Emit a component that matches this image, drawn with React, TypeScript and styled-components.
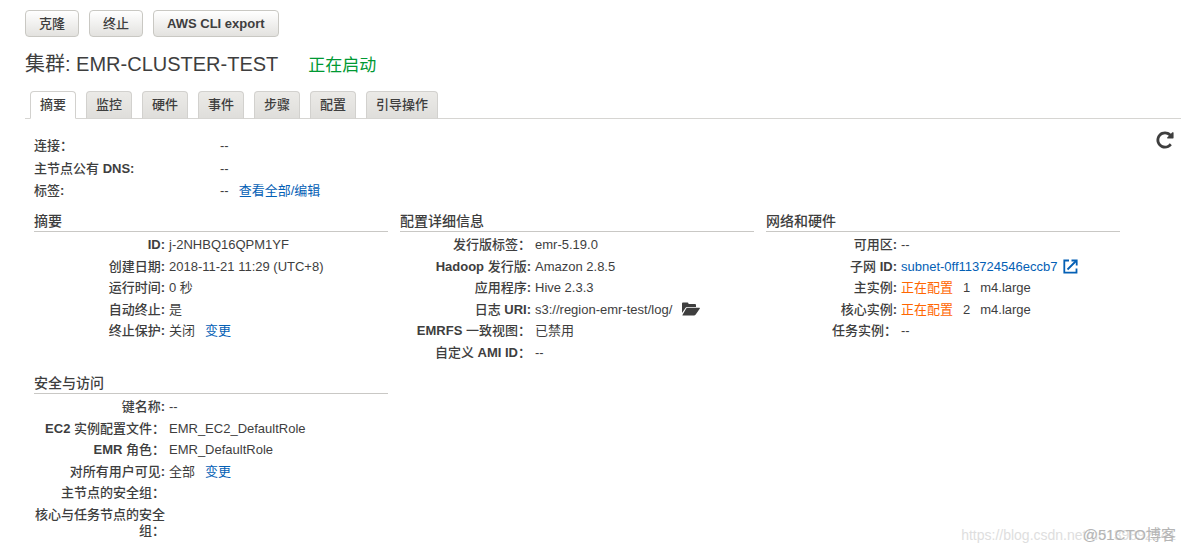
import React from "react";
import styled, { createGlobalStyle } from "styled-components";

const Global = createGlobalStyle`
  * { box-sizing: border-box; }
  body {
    margin: 0;
    background: #fff;
    color: #3e3e3e;
    font: 13px/16px "Liberation Sans", "Noto Sans CJK SC", sans-serif;
  }
`;

const Page = styled.main`
  position: relative;
  min-height: 100vh;
  padding: 10px 3px 10px 25px;
`;

const Toolbar = styled.div`
  display: flex;
  gap: 10px;
`;

const Strong = styled.strong`
  font-weight: 700;
`;

const Button = styled.button`
  height: 27px;
  padding: 0 13px;
  border: 1px solid #c9c8c3;
  border-radius: 4px;
  background: linear-gradient(#fff, #e3e2df);
  color: inherit;
  font: inherit;
  font-weight: 500;
  white-space: nowrap;
`;

const TitleRow = styled.header`
  display: flex;
  align-items: baseline;
  gap: 30px;
  margin-top: 15px;
`;

const Title = styled.h1`
  margin: 0;
  font-size: 20px;
  line-height: 24px;
  font-weight: 400;
`;

const Status = styled.span`
  color: #093;
  font-size: 17px;
  line-height: 24px;
`;

const Tabs = styled.div`
  display: flex;
  gap: 10px;
  margin-top: 13px;
  padding-left: 5px;
  border-bottom: 1px solid #d6d5d2;
`;

const Tab = styled.button<{ $active?: boolean }>`
  height: 28px;
  margin-bottom: -1px;
  padding: 0 9px;
  border: 1px solid #d2d1ce;
  border-bottom-color: ${(p) => (p.$active ? "#fff" : "#d6d5d2")};
  border-radius: 4px 4px 0 0;
  background: ${(p) => (p.$active ? "#fff" : "linear-gradient(#ebeae7, #dfdedb)")};
  color: inherit;
  font: inherit;
  font-weight: 500;
`;

const Overview = styled.div`
  display: flex;
  justify-content: space-between;
  align-items: flex-start;
  padding: 11px 6px 0 9px;
`;

const Facts = styled.dl`
  display: grid;
  grid-template-columns: 186px auto;
  grid-auto-rows: 23px 22px;
  margin: 8px 0 0;
`;

const Label = styled.dt`
  font-weight: 500;
`;

const Value = styled.dd`
  display: flex;
  align-items: flex-start;
  gap: 10px;
  margin: 0;
`;

const Link = styled.a`
  display: inline-flex;
  gap: 6px;
  color: #0460b5;
  text-decoration: none;
`;

const IconButton = styled.button`
  display: flex;
  padding: 0;
  border: 0;
  background: none;
  color: inherit;
`;

const Sections = styled.div`
  display: grid;
  grid-template-columns: repeat(3, 1fr);
  gap: 9px 12px;
  margin-top: 7px;
  padding: 0 61px 0 9px;
`;

const SectionTitle = styled.h2`
  margin: 0;
  padding-bottom: 1px;
  border-bottom: 1px solid #c9c8c5;
  font-size: 14px;
  line-height: 17px;
  font-weight: 500;
`;

const Details = styled.dl`
  display: grid;
  grid-template-columns: 131px 1fr;
  grid-auto-rows: minmax(22px, auto) minmax(21px, auto);
  column-gap: 4px;
  margin: 5px 0 0;

  ${Label} { text-align: right; }
`;

const Provisioning = styled.span`
  color: #f60;
`;

const Watermark = styled.div`
  position: absolute;
  right: 8px;
  bottom: 8px;
  display: grid;
  justify-items: end;
  line-height: 18px;
  white-space: nowrap;

  > * { grid-area: 1 / 1; }
`;

const BlogUrl = styled.span`
  color: #dedede;
  font-size: 14px;
`;

const SiteName = styled.span`
  color: #b4b4b4;
  font-size: 15px;
`;

const RefreshIcon = () => (
  <svg width="20" height="20" viewBox="0 0 1792 1792" fill="currentColor" aria-hidden="true">
    <path d="M1664 256v448q0 26-19 45t-45 19h-448q-42 0-59-40-17-39 14-69l138-138q-148-137-349-137-104 0-198.5 40.5t-163.5 109.5-109.5 163.5-40.5 198.5 40.5 198.5 109.5 163.5 163.5 109.5 198.5 40.5q119 0 225-52t179-147q7-10 23-12 15 0 25 9l137 138q9 8 9.5 20.5t-7.5 22.5q-109 132-264 204.5t-327 72.5q-156 0-298-61t-245-164-164-245-61-298 61-298 164-245 245-164 298-61q147 0 284.5 55.5t244.5 156.5l130-129q29-31 70-14 39 17 39 59z" />
  </svg>
);

const FolderIcon = () => (
  <svg width="18" height="14" viewBox="0 0 18 14" fill="currentColor" aria-hidden="true">
    <path d="M0 11V1.5Q0 .5 1 .5H5.5Q6.3 .5 6.5 1.5V2H13Q14 2 14 3V5H5.2Q4.2 5 3.6 5.8Z" />
    <path d="M5.3 5.8H17.4Q18.3 5.8 17.7 6.7L13.7 12.5Q13 13.5 12 13.5H.8Q.2 13.5 .6 12.8L4.2 6.5Q4.6 5.8 5.3 5.8Z" />
  </svg>
);

const ExternalIcon = () => (
  <svg width="15" height="15" viewBox="0 0 15 15" fill="none" stroke="currentColor" strokeWidth="1.8" aria-hidden="true">
    <path d="M6 1.5H1.3V13.7H13.5V9.5M4.5 10.5L13 2" />
    <path d="M8.5 1.5H13.7V6.5" />
  </svg>
);

type Row = [label: string, value?: React.ReactNode];

/* Latin runs and colons are set bold, Chinese characters keep the label's own weight. */
const Caption = ({ text }: { text: string }) => (
  <>
    {text.split(/([\x20-\x7e]+)/).map((part, i) => (i % 2 ? <Strong key={i}>{part}</Strong> : part))}
  </>
);

const Rows = ({ rows }: { rows: Row[] }) => (
  <>
    {rows.map(([label, value]) => (
      <React.Fragment key={label}>
        <Label><Caption text={label} /></Label>
        <Value>{value}</Value>
      </React.Fragment>
    ))}
  </>
);

const Section = ({ title, rows }: { title: string; rows: Row[] }) => (
  <section>
    <SectionTitle>{title}</SectionTitle>
    <Details><Rows rows={rows} /></Details>
  </section>
);

const Instance = ({ count }: { count: number }) => (
  <>
    <Provisioning>正在配置</Provisioning>
    <span>{count}</span>
    <span>m4.large</span>
  </>
);

const actions = ["克隆", "终止", "AWS CLI export"];

const tabs = ["摘要", "监控", "硬件", "事件", "步骤", "配置", "引导操作"];

const facts: Row[] = [
  ["连接：", "--"],
  ["主节点公有 DNS:", "--"],
  ["标签:", <><span>--</span><Link href="#tags">查看全部/编辑</Link></>],
];

const summary: Row[] = [
  ["ID:", "j-2NHBQ16QPM1YF"],
  ["创建日期:", "2018-11-21 11:29 (UTC+8)"],
  ["运行时间:", "0 秒"],
  ["自动终止:", "是"],
  ["终止保护:", <><span>关闭</span><Link href="#protection">变更</Link></>],
];

const configuration: Row[] = [
  ["发行版标签：", "emr-5.19.0"],
  ["Hadoop 发行版:", "Amazon 2.8.5"],
  ["应用程序:", "Hive 2.3.3"],
  ["日志 URI:", <><span>s3://region-emr-test/log/</span><IconButton aria-label="打开日志文件夹"><FolderIcon /></IconButton></>],
  ["EMRFS 一致视图：", "已禁用"],
  ["自定义 AMI ID：", "--"],
];

const network: Row[] = [
  ["可用区:", "--"],
  ["子网 ID:", <Link href="#subnet">subnet-0ff113724546eccb7<ExternalIcon /></Link>],
  ["主实例:", <Instance count={1} />],
  ["核心实例:", <Instance count={2} />],
  ["任务实例：", "--"],
];

const security: Row[] = [
  ["键名称:", "--"],
  ["EC2 实例配置文件：", "EMR_EC2_DefaultRole"],
  ["EMR 角色：", "EMR_DefaultRole"],
  ["对所有用户可见:", <><span>全部</span><Link href="#visibility">变更</Link></>],
  ["主节点的安全组："],
  ["核心与任务节点的安全组："],
];

export default function App() {
  return (
    <>
      <Global />
      <Page>
        <Toolbar>
          {actions.map((name) => (
            <Button key={name}><Caption text={name} /></Button>
          ))}
        </Toolbar>
        <TitleRow>
          <Title>集群: EMR-CLUSTER-TEST</Title>
          <Status>正在启动</Status>
        </TitleRow>
        <Tabs role="tablist">
          {tabs.map((name, i) => (
            <Tab key={name} role="tab" aria-selected={i === 0} $active={i === 0}>{name}</Tab>
          ))}
        </Tabs>
        <Overview>
          <Facts><Rows rows={facts} /></Facts>
          <IconButton aria-label="刷新"><RefreshIcon /></IconButton>
        </Overview>
        <Sections>
          <Section title="摘要" rows={summary} />
          <Section title="配置详细信息" rows={configuration} />
          <Section title="网络和硬件" rows={network} />
          <Section title="安全与访问" rows={security} />
        </Sections>
        <Watermark>
          <BlogUrl>https://blog.csdn.net/u0139892341</BlogUrl>
          <SiteName>@51CTO博客</SiteName>
        </Watermark>
      </Page>
    </>
  );
}
